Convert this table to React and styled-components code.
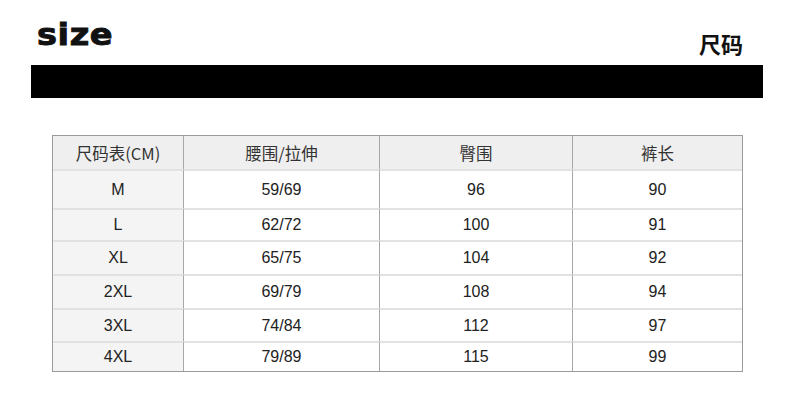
import React from "react";
import styled, { createGlobalStyle } from "styled-components";

const Global = createGlobalStyle`
  html, body { margin: 0; padding: 0; background: #fff; }
  body { font-family: "Noto Sans CJK SC", "Liberation Sans", sans-serif; }
`;

const Page = styled.div`
  width: 790px;
  height: 416px;
  background: #fff;
  box-sizing: border-box;
  padding-top: 20px;
  overflow: hidden;
`;

const Header = styled.div`
  display: flex;
  justify-content: space-between;
  align-items: flex-end;
  padding: 0 47px 0 37px;
  height: 40px;
`;

const Logo = styled.div`
  font-family: "DejaVu Sans", sans-serif;
  font-weight: 900;
  font-size: 30px;
  line-height: 1;
  letter-spacing: 0.5px;
  color: #111;
  -webkit-text-stroke: 0.9px #111;
  transform: scaleX(1.12);
  transform-origin: left center;
  align-self: flex-start;
  margin-top: 0px;
`;

const Title = styled.div`
  font-family: "Noto Sans CJK SC", sans-serif;
  font-weight: 700;
  font-size: 22px;
  line-height: 1;
  color: #111;
  margin-bottom: 6px;
`;

const Bar = styled.div`
  margin: 5px 27px 0 31px;
  height: 33px;
  background: #000;
`;

const Table = styled.div`
  margin: 37px 47px 0 52px;
  display: grid;
  grid-template-columns: 130px 196px 193px 1fr;
  grid-template-rows: ${p => p.$rows};
  border: 1px solid #9a9a9a;
  box-sizing: border-box;
  height: 237px;
`;

const Cell = styled.div`
  display: flex;
  align-items: center;
  justify-content: center;
  font-family: "Liberation Sans", "Noto Sans CJK SC", sans-serif;
  font-size: 16px;
  color: #222;
  background: ${p => (p.$head ? "#efefef" : p.$first ? "#f4f4f4" : "#fff")};
  border-left: ${p => (p.$col > 0 ? "1px solid #a8a8a8" : "none")};
  border-top: ${p => (p.$row > 0 ? "2px solid #e2e2e2" : "none")};
  box-sizing: border-box;
`;

const CjkText = styled.span`
  font-family: "Noto Sans CJK SC", sans-serif;
  font-size: 16.5px;
  color: #333;
`;

const headers = ["尺码表(CM)", "腰围/拉伸", "臀围", "裤长"];
const rows = [
  ["M", "59/69", "96", "90"],
  ["L", "62/72", "100", "91"],
  ["XL", "65/75", "104", "92"],
  ["2XL", "69/79", "108", "94"],
  ["3XL", "74/84", "112", "97"],
  ["4XL", "79/89", "115", "99"],
];

export default function App() {
  return (
    <Page>
      <Global />
      <Header>
        <Logo>size</Logo>
        <Title>尺码</Title>
      </Header>
      <Bar />
      <Table $rows="33px 39px 32px 34px 34px 33px 1fr">
        {headers.map((h, i) => (
          <Cell key={h} $head $col={i} $row={0}>
            <CjkText>{h}</CjkText>
          </Cell>
        ))}
        {rows.map((r, ri) =>
          r.map((v, ci) => (
            <Cell key={ri + "-" + ci} $first={ci === 0} $col={ci} $row={ri + 1}>
              {v}
            </Cell>
          ))
        )}
      </Table>
    </Page>
  );
}
